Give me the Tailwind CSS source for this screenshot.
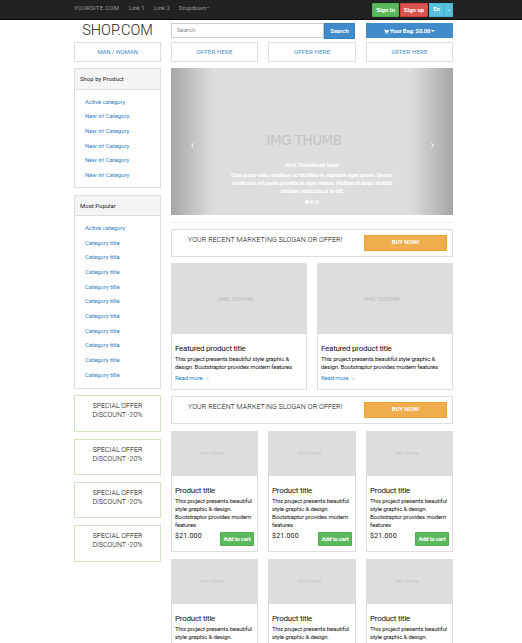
<!DOCTYPE html>
<html lang="en">
<head>
<meta charset="utf-8">
<title>Shop</title>
<script src="https://cdn.jsdelivr.net/npm/@tailwindcss/browser@4"></script>
</head>
<body class="bg-white h-[643px] overflow-hidden font-[Roboto,sans-serif] text-[6px] leading-[8px] text-[#222] whitespace-nowrap">
<nav class="h-5 bg-[#222] border-b border-[#080808] pl-[74px] pr-[69px] flex justify-between text-[#999]">
  <div class="flex pt-1">
    <span class="w-[55px] tracking-[0.25px]">YOURSITE.COM</span>
    <span class="w-[25px] tracking-[-0.05px]">Link 1</span>
    <span class="w-[25px]">Link 2</span>
    <span>Dropdown<i class="inline-block ml-px mb-[2px] border-x-[1.5px] border-t-[1.5px] border-x-transparent border-t-[#999]"></i></span>
  </div>
  <div class="flex pt-[3px] text-white font-bold text-[6px]">
    <span class="w-[27px] h-[14px] leading-[12px] text-center bg-[#5cb85c] border border-[#4cae4c] rounded-[1px] mr-px">Sign in</span>
    <span class="w-[28px] h-[14px] leading-[12px] text-center bg-[#d9534f] border border-[#d43f3a] rounded-[1px] mr-px">Sign up</span>
    <span class="w-[15px] h-[14px] leading-[10px] text-center bg-[#5bc0de] border border-[#46b8da]">En</span>
    <span class="w-[9px] h-[14px] bg-[#5bc0de] border border-[#46b8da] flex items-center justify-center"><i class="border-x-[1px] border-t-[1px] border-x-transparent border-t-white"></i></span>
  </div>
</nav>
<div class="flex gap-[10px] pl-[74px]">
  <aside class="w-[87px]">
    <h1 class="h-[22px] pt-[2px] text-center text-[14.5px] leading-[17px] font-light">SHOP.COM</h1>
    <a class="block h-5 border border-[#ddd] leading-[18px] text-center text-[#428bca] tracking-[-0.15px]">MAN / WOMAN</a>
    <section class="mt-[6px] h-[120px] border border-[#ddd]">
      <h2 class="h-[21px] leading-[20px] bg-[#f5f5f5] border-b border-[#ddd] pl-[5px]">Shop by Product</h2>
      <div id="new" class="pt-[4.5px] pl-[10px] leading-[14.67px] text-[#337fc4] tracking-[-0.07px]"></div>
    </section>
    <section class="mt-[7px] h-[194px] border border-[#ddd]">
      <h2 class="h-[20px] leading-[20px] bg-[#f5f5f5] border-b border-[#ddd] pl-[5px]">Most Popular</h2>
      <div id="cats" class="pt-[5px] pl-[10px] leading-[14.67px] text-[#337fc4] tracking-[-0.07px]"></div>
    </section>
    <div id="specials" class="pt-[6px] flex flex-col gap-[7px] text-center text-[7px] leading-[9px] font-light text-black"></div>
  </aside>
  <main class="w-[282px]">
    <div class="flex h-[22px] pt-[3px]">
      <div class="w-[153px] h-[15px] border border-[#ccc] pl-[5px] leading-[12px] text-[#888]">Search</div>
      <div class="w-[31px] h-4 border border-[#357ebd] bg-[#428bca] text-white text-center leading-[14px] font-bold tracking-[-0.05px]">Search</div>
      <div class="ml-[11px] w-[87px] h-[15px] bg-[#428bca] text-white font-bold flex items-center justify-center tracking-[-0.17px]">
        <svg class="w-[5px] h-[5px] mr-[1px] mt-px" viewBox="0 0 10 10" fill="#fff"><path d="M0 1h2l.4 1H10L9 6H3.4l.2 1H9v1H2.8L1.3 2H0z"/><circle cx="4" cy="9" r="1"/><circle cx="8" cy="9" r="1"/></svg>
        <span>Your Bag: $0.00</span><i class="ml-px border-x-[2px] border-t-[2px] border-x-transparent border-t-white"></i>
      </div>
    </div>
    <div class="grid grid-cols-[87px_88px_87px] gap-[10px] h-5 leading-[18px] text-center text-[#428bca] tracking-[0.2px]">
      <a class="border border-[#ddd]">OFFER HERE</a><a class="border border-[#ddd]">OFFER HERE</a><a class="border border-[#ddd]">OFFER HERE</a>
    </div>
    <section class="mt-[6px] h-[147px] bg-[#ddd] flex text-white">
      <div class="w-[42px] bg-linear-to-r from-[#a6a6a6] to-[#ddd] flex items-center justify-center pt-[8px]"><svg class="w-[3px] h-[5px]" viewBox="0 0 3 5" fill="none" stroke="#fff"><path d="M2.5.3.7 2.5l1.8 2.2"/></svg></div>
      <div class="flex-1 text-center">
        <div class="pt-[64px] pr-[16px] text-[13.5px] leading-[16px] text-[#c4c4c4] font-['DejaVu_Sans',sans-serif] tracking-[-0.5px]">IMG THUMB</div>
        <div class="mt-[13px] font-bold tracking-[-0.17px]">First Thumbnail label</div>
        <p class="mt-[2px] -mx-2 font-bold tracking-[-0.22px]">Cras justo odio, dapibus ac facilisis in, egestas eget quam. Donec<br>id elit non mi porta gravida at eget metus. Nullam id dolor id nibh<br>ultricies vehicula ut id elit.</p>
        <div class="flex justify-center gap-px mt-[5px]"><i class="size-[4px] rounded-full bg-white"></i><i class="size-[4px] rounded-full border border-white"></i><i class="size-[4px] rounded-full border border-white"></i></div>
      </div>
      <div class="w-[42px] bg-linear-to-l from-[#a6a6a6] to-[#ddd] flex items-center justify-center pt-[8px]"><svg class="w-[3px] h-[5px]" viewBox="0 0 3 5" fill="none" stroke="#fff"><path d="M.5.3l1.8 2.2L.5 4.7"/></svg></div>
    </section>
    <hr class="mt-[7px] mb-[6px] border-[#eee]">
    <div class="h-7 border border-[#ddd] flex justify-between pl-4 pr-[5px] pt-[5px]">
      <span class="text-[7px] leading-[10px] tracking-[0.12px] font-light text-black">YOUR RECENT MARKETING SLOGAN OR OFFER!</span>
      <span class="w-[83px] h-4 bg-[#f0ad4e] border border-[#eea236] text-white text-center leading-[12px] font-bold tracking-[-0.1px]">BUY NOW!</span>
    </div>
    <div id="featured" class="mt-[6px] grid grid-cols-2 gap-[10px]"></div>
    <div class="mt-[6px] h-7 border border-[#ddd] flex justify-between pl-4 pr-[5px] pt-[5px]">
      <span class="text-[7px] leading-[10px] tracking-[0.12px] font-light text-black">YOUR RECENT MARKETING SLOGAN OR OFFER!</span>
      <span class="w-[83px] h-4 bg-[#f0ad4e] border border-[#eea236] text-white text-center leading-[12px] font-bold tracking-[-0.1px]">BUY NOW!</span>
    </div>
    <div id="products" class="mt-[7px] grid grid-cols-[87px_88px_87px] gap-x-[10px] gap-y-[7px]"></div>
  </main>
</div>
<script>
const fill = (id, n, f) => document.getElementById(id).innerHTML = Array.from({length: n}, (_, i) => f(i)).join('');
fill('new', 6, i => `<div>${i ? 'New in! Category' : 'Active category'}</div>`);
fill('cats', 11, i => `<div>${i ? 'Category title' : 'Active category'}</div>`);
fill('specials', 4, i => `<div class="${i % 3 ? 'h-[36px]' : 'h-[37px]'} border border-[#d0e6bf] pt-[6px]">SPECIAL OFFER<br>DISCOUNT -20%</div>`);
fill('featured', 2, () => `<article class="h-[127px] border border-[#ddd]">
  <div class="h-[70px] bg-[#ddd] text-center leading-[70px] text-[5.4px] font-bold text-[#c8c8c8] font-['DejaVu_Sans',sans-serif] pr-[7px]">IMG THUMB</div>
  <div class="pl-[3px] pt-[9px] text-[#111]"><h3 class="text-[8px] leading-[11px] tracking-[-0.25px]">Featured product title</h3>
  <p class="pt-[1px] tracking-[-0.16px]">This project presents beautiful style graphic &amp;<br>design. Bootstraptor provides modern features</p>
  <a class="block pt-[3px] text-[#337fc4] tracking-[-0.15px]">Read more →</a></div></article>`);
fill('products', 6, () => `<article class="h-[121px] border border-[#ddd]">
  <div class="h-[44px] bg-[#ddd] text-center leading-[44px] text-[4px] text-[#c4c4c4] font-['DejaVu_Sans',sans-serif] pr-[5px]">IMG THUMB</div>
  <div class="pl-[3px] pr-[3px] pt-[9px] text-[#111]"><h3 class="text-[8px] leading-[11px] tracking-[-0.25px]">Product title</h3>
  <p class="pt-[1px] tracking-[-0.13px]">This project presents beautiful<br>style graphic &amp; design.<br>Bootstraptor provides modern<br>features</p>
  <div class="flex justify-between pt-[3px]"><span class="text-[7px] leading-[9px] tracking-[0.2px]">$21.000</span><span class="w-[34px] h-[14px] bg-[#5cb85c] border border-[#4cae4c] text-white text-center leading-[12px] font-bold rounded-[1px] tracking-[-0.25px]">Add to cart</span></div></div></article>`);
</script>
</body>
</html>
